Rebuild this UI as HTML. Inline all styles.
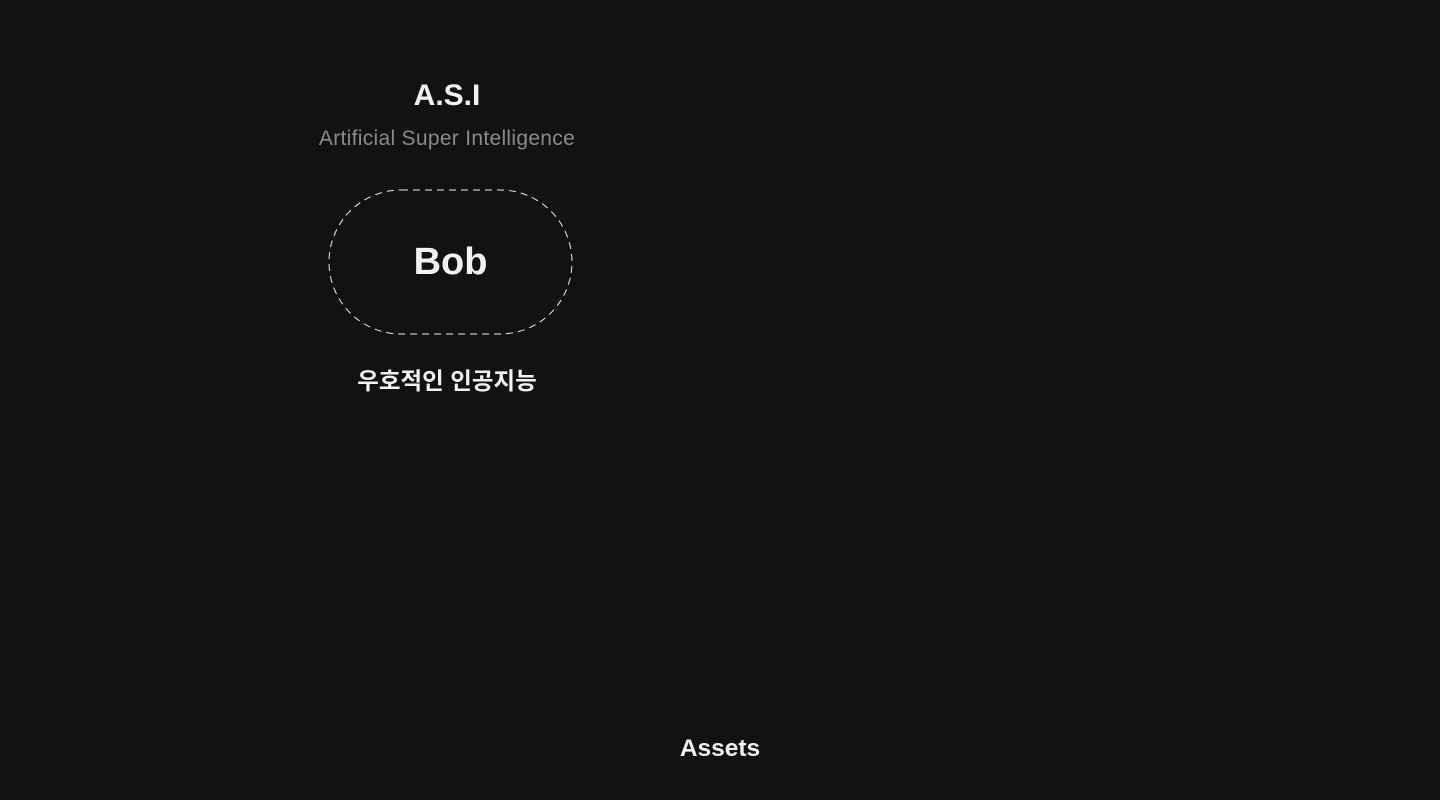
<!DOCTYPE html>
<html><head><meta charset="utf-8"><style>
html,body{margin:0;width:1440px;height:800px;background:#121212;overflow:hidden;font-family:"Liberation Sans","Noto Sans CJK KR",sans-serif;color:#f2f2f2}
.a{position:absolute;left:0;width:894px;text-align:center}
</style></head><body>
<div class="a" style="top:77px;font-size:30px;font-weight:bold;line-height:38px">A.S.I</div>
<div class="a" style="top:126px;font-size:21px;letter-spacing:0.3px;color:#8a8a8a;line-height:26px">Artificial Super Intelligence</div>
<svg style="position:absolute;left:328px;top:189px" width="246" height="147">
<rect x="1" y="1" width="243" height="144" rx="72" ry="72" fill="none" stroke="#eee" stroke-width="1" stroke-dasharray="7 5"/>
</svg>
<div style="position:absolute;left:329px;width:243px;top:238px;text-align:center;font-size:38px;font-weight:bold;line-height:48px">Bob</div>
<div class="a" style="top:366px;font-size:23.5px;font-weight:bold;line-height:30px">우호적인 인공지능</div>
<div style="position:absolute;left:0;width:1440px;top:734px;text-align:center;font-size:24.5px;font-weight:bold;line-height:30px">Assets</div>
</body></html>
